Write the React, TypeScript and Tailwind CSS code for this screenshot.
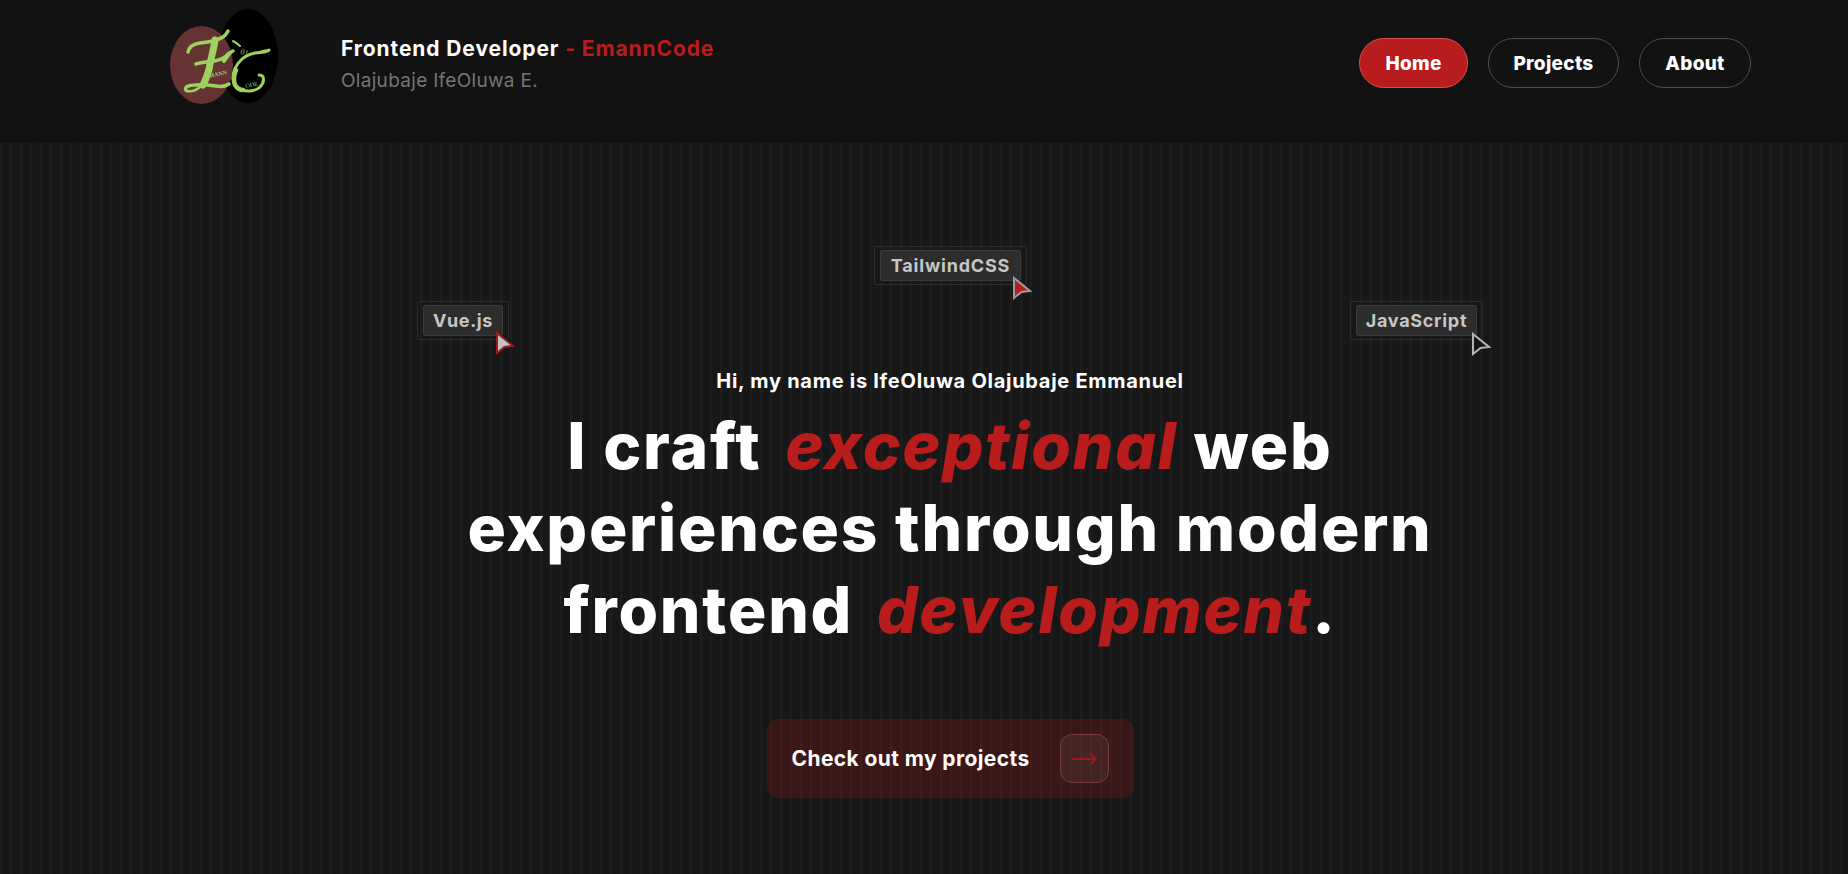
import { MoveRight } from "lucide-react";

const navItems = [
  { label: "Home", active: true },
  { label: "Projects", active: false },
  { label: "About", active: false },
];

// svg y here is the page y, so the logo can poke out above its box like the original
const Logo = () => (
  <svg width="110" height="98" viewBox="0 14 110 98" className="shrink-0 overflow-visible">
    <ellipse cx="78" cy="56" rx="30" ry="47" fill="#000000" />
    <ellipse cx="31.5" cy="65" rx="31.5" ry="39" fill="#663333" />
    <g fill="none" stroke="#9dd25f" strokeLinecap="round" strokeLinejoin="round">
      {/* E */}
      <path d="M18 52c1-5 5-8 12-9 9-1 17-2 23-6 3-2 4-4 5-6" strokeWidth="3.5" />
      <path d="M45 40c-1 8-3 14-5 24-1 8-4 15-7 21" strokeWidth="7" />
      <path d="M26 64c6-2 12-2 18-3 6-1 12-4 14-7 2-1 3-2 5-3" strokeWidth="3.5" />
      <path d="M54 61c2-3 3-5 5-7" strokeWidth="4" />
      <path d="M16 90c-2-3 3-5 9-5 7-1 14 0 21 1 6 1 10 0 13-2" strokeWidth="3.5" />
      <path d="M16 91c5 1 11-1 15-5" strokeWidth="2.5" />
      {/* C */}
      <path d="M99 50c-2 3-8 2-14 3-5 1-10 3-14 7-5 5-8 12-8 18 0 6 3 10 9 12 6 2 14 1 18-3 3-3 4-7 3-10-1-2-3-2-4-2" strokeWidth="3" />
      <path d="M66 70c-2 5-3 10-1 15 2 3 5 5 8 5" strokeWidth="4.5" />
      <path d="M86 53c4-1 9-3 13-3" strokeWidth="2" />
      <path d="M63 41c2 1 4 2 7 5" strokeWidth="2" />
    </g>
    <text x="70" y="54" fill="#9dd25f" fontSize="8" fontFamily="'Liberation Serif', serif" transform="rotate(14 70 54)">
      01
    </text>
    <text x="39" y="78" fill="#9dd25f" fontSize="6" fontWeight="bold" fontFamily="'Liberation Serif', serif" transform="rotate(-12 39 78)">
      MANN
    </text>
    <text x="76" y="88" fill="#9dd25f" fontSize="6" fontFamily="'Liberation Serif', serif" transform="rotate(-12 76 88)">
      ODE
    </text>
  </svg>
);

const Cursor = ({ fill, stroke, className }: { fill: string; stroke: string; className: string }) => (
  <svg width="20" height="24" viewBox="0 0 20 24" className={className}>
    <path d="M2 2 L18 15 L9.5 16 L2 22 Z" fill={fill} stroke={stroke} strokeWidth="2" strokeLinejoin="miter" />
  </svg>
);

const Tag = ({ label, className, tracking }: { label: string; className: string; tracking: string }) => (
  <div className={`absolute h-[39px] rounded-[2px] border border-[#2b2b2b] px-[5px] py-[3px] ${className}`}>
    <div
      className={`flex h-[31px] items-center justify-center rounded-[2px] border border-[#3b3b3b] bg-[#2d2d2d] text-[18px] font-bold text-[#c6c6c6] ${tracking}`}
    >
      {label}
    </div>
  </div>
);

export default function App() {
  return (
    <div className="h-[874px] w-full overflow-hidden bg-[#171717] font-['Inter',sans-serif] text-white">
      <header className="flex h-[143px] items-center justify-between bg-[#121212] pb-[17px] pl-[170px] pr-[97px]">
        <div className="flex items-center gap-[61px]">
          <Logo />
          <div className="flex flex-col gap-[8px] pt-[3px]">
            <div className="text-[21px] leading-[24px] font-bold tracking-[0.9px]">
              Frontend Developer <span className="text-[#b91c1c]">- EmannCode</span>
            </div>
            <div className="text-[19px] leading-[24px] tracking-[0.3px] text-[#757575]">Olajubaje IfeOluwa E.</div>
          </div>
        </div>
        <nav className="flex gap-[20px]">
          {navItems.map((item) => (
            <a
              key={item.label}
              className={
                item.active
                  ? "flex h-[50px] w-[109px] items-center justify-center rounded-full border border-[#d65050] bg-[#b91c1c] pt-[2px] text-[19px] font-extrabold tracking-[0.3px]"
                  : item.label === "Projects"
                    ? "flex h-[50px] w-[131px] items-center justify-center rounded-full border border-[#4d4d4d] pt-[2px] text-[19px] font-extrabold tracking-[0.3px]"
                    : "flex h-[50px] w-[112px] items-center justify-center rounded-full border border-[#4d4d4d] pt-[2px] text-[19px] font-extrabold tracking-[0.3px]"
              }
            >
              {item.label}
            </a>
          ))}
        </nav>
      </header>

      <main className="relative flex h-[731px] flex-col items-center bg-[#171717] bg-[repeating-linear-gradient(90deg,#1f1f1f_0px,#1c1c1c_2px,#171717_3px,#171717_10px)] pl-[52px] pt-[224px]">
        <Tag label="TailwindCSS" className="left-[874px] top-[103px] w-[153px]" tracking="tracking-[0.8px]" />
        <Cursor fill="#b91c1c" stroke="#9a9a9a" className="absolute left-[1012px] top-[133px]" />
        <Tag label="Vue.js" className="left-[417px] top-[158px] w-[92px]" tracking="tracking-[0.6px]" />
        <Cursor fill="#c4c4c4" stroke="#991b1b" className="absolute left-[495px] top-[188px]" />
        <Tag label="JavaScript" className="left-[1350px] top-[158px] w-[133px]" tracking="tracking-[0.7px]" />
        <Cursor fill="#171717" stroke="#b5b5b5" className="absolute left-[1471px] top-[189px]" />

        <p className="text-[20px] leading-[28px] font-bold tracking-[0.72px]">
          Hi, my name is IfeOluwa Olajubaje Emmanuel
        </p>
        <h1 className="mt-[10px] w-[1060px] text-center text-[64px] leading-[82px] font-extrabold tracking-[1.8px]">
          I craft <span className="ml-[8px] italic text-[#b91c1c]">exceptional</span> web
          <br />
          experiences through modern
          <br />
          frontend <span className="ml-[8px] italic text-[#b91c1c]">development</span>.
        </h1>
        <button className="mt-[68px] flex h-[79px] w-[367px] items-center justify-between rounded-[12px] bg-[#b91c1c]/[0.22] pl-[25px] pr-[25px] text-[21px] font-bold">
          <span className="tracking-[0.4px]">Check out my projects</span>
          <span className="flex h-[49px] w-[49px] items-center justify-center rounded-[12px] border border-[#7a3a3a] bg-white/5">
            <MoveRight size={28} strokeWidth={1.6} className="text-[#991b1b]" />
          </span>
        </button>
      </main>
    </div>
  );
}
